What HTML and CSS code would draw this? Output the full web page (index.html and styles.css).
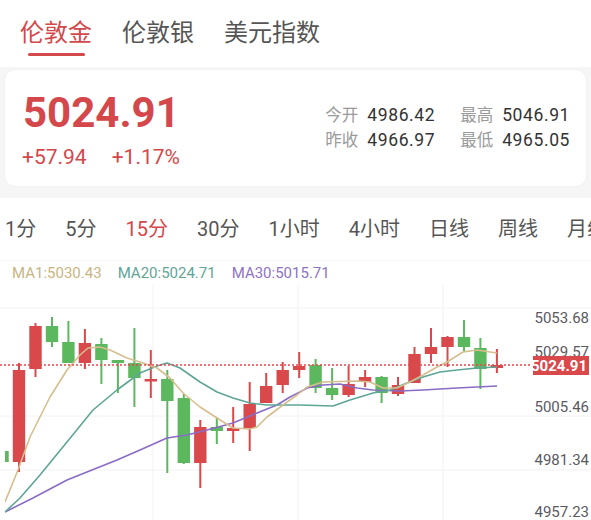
FILE: index.html
```html
<!DOCTYPE html>
<html lang="zh-CN">
<head>
<meta charset="utf-8">
<title>伦敦金</title>
<link rel="stylesheet" href="styles.css">
</head>
<body>
<div class="header">
  <div class="tab active"><span class="tab-label">伦敦金</span><span class="tab-line"></span></div>
  <div class="tab"><span class="tab-label">伦敦银</span></div>
  <div class="tab"><span class="tab-label">美元指数</span></div>
</div>

<div class="quote-wrap">
  <div class="quote-card">
    <div class="quote-main">
      <div class="price">5024.91</div>
      <div class="change"><span>+57.94</span><span>+1.17%</span></div>
    </div>
    <div class="stats">
      <div class="stat"><span class="stat-label">今开</span><span class="stat-value">4986.42</span></div>
      <div class="stat"><span class="stat-label">最高</span><span class="stat-value">5046.91</span></div>
      <div class="stat"><span class="stat-label">昨收</span><span class="stat-value">4966.97</span></div>
      <div class="stat"><span class="stat-label">最低</span><span class="stat-value">4965.05</span></div>
    </div>
  </div>
</div>

<div class="periods">
  <span class="period">1分</span>
  <span class="period">5分</span>
  <span class="period active">15分</span>
  <span class="period">30分</span>
  <span class="period">1小时</span>
  <span class="period">4小时</span>
  <span class="period">日线</span>
  <span class="period">周线</span>
  <span class="period">月线</span>
</div>

<div class="legend">
  <span class="ma ma1">MA1:5030.43</span>
  <span class="ma ma20">MA20:5024.71</span>
  <span class="ma ma30">MA30:5015.71</span>
</div>

<svg class="chart" width="591" height="235" viewBox="0 285 591 235" xmlns="http://www.w3.org/2000/svg">
  <defs>
    <clipPath id="plot"><rect x="5" y="285" width="528" height="235"/></clipPath>
  </defs>
  <g class="grid">
    <line x1="0" y1="308" x2="591" y2="308"/>
    <line x1="0" y1="362" x2="591" y2="362"/>
    <line x1="0" y1="416" x2="591" y2="416"/>
    <line x1="0" y1="470" x2="591" y2="470"/>
    <line x1="153" y1="285" x2="153" y2="520"/>
    <line x1="298" y1="285" x2="298" y2="520"/>
    <line x1="443" y1="285" x2="443" y2="520"/>
  </g>
  <g clip-path="url(#plot)">
    <g class="up">
      <line x1="19" y1="363" x2="19" y2="472"/><rect x="12.8" y="370" width="12.4" height="92"/>
      <line x1="35.5" y1="323" x2="35.5" y2="377"/><rect x="29.3" y="326" width="12.4" height="43"/>
      <line x1="84.9" y1="329" x2="84.9" y2="369"/><rect x="78.7" y="343" width="12.4" height="20"/>
      <line x1="150.8" y1="350" x2="150.8" y2="398"/><rect x="144.6" y="379" width="12.4" height="2.5"/>
      <line x1="200.3" y1="420" x2="200.3" y2="488"/><rect x="194.1" y="427" width="12.4" height="36"/>
      <line x1="233.2" y1="407" x2="233.2" y2="443"/><rect x="227" y="428" width="12.4" height="3"/>
      <line x1="249.7" y1="382" x2="249.7" y2="451"/><rect x="243.5" y="404" width="12.4" height="24"/>
      <line x1="266.2" y1="373" x2="266.2" y2="403"/><rect x="260" y="386" width="12.4" height="17"/>
      <line x1="282.7" y1="362" x2="282.7" y2="393"/><rect x="276.5" y="370" width="12.4" height="15"/>
      <line x1="299.2" y1="352" x2="299.2" y2="378"/><rect x="293" y="366" width="12.4" height="4"/>
      <line x1="348.6" y1="366" x2="348.6" y2="397"/><rect x="342.4" y="384" width="12.4" height="11"/>
      <line x1="365.1" y1="370" x2="365.1" y2="387"/><rect x="358.9" y="377" width="12.4" height="5"/>
      <line x1="398" y1="377" x2="398" y2="396"/><rect x="391.8" y="385" width="12.4" height="9"/>
      <line x1="414.5" y1="347" x2="414.5" y2="383"/><rect x="408.3" y="354" width="12.4" height="29"/>
      <line x1="431" y1="328" x2="431" y2="363"/><rect x="424.8" y="347" width="12.4" height="7"/>
      <line x1="447.5" y1="336" x2="447.5" y2="367"/><rect x="441.3" y="337" width="12.4" height="10"/>
      <line x1="496.9" y1="349" x2="496.9" y2="373"/><rect x="490.7" y="365" width="12.4" height="3"/>
    </g>
    <g class="down">
      <rect x="-3.7" y="451" width="12.4" height="11"/>
      <line x1="52" y1="317" x2="52" y2="347"/><rect x="45.8" y="326" width="12.4" height="16"/>
      <line x1="68.4" y1="321" x2="68.4" y2="363"/><rect x="62.2" y="342" width="12.4" height="21"/>
      <line x1="101.4" y1="338" x2="101.4" y2="384"/><rect x="95.2" y="344" width="12.4" height="16"/>
      <line x1="117.9" y1="360" x2="117.9" y2="393"/><rect x="111.7" y="360" width="12.4" height="3"/>
      <line x1="134.4" y1="328" x2="134.4" y2="407"/><rect x="128.2" y="363" width="12.4" height="15"/>
      <line x1="167.3" y1="370" x2="167.3" y2="473"/><rect x="161.1" y="379" width="12.4" height="22"/>
      <line x1="183.8" y1="394" x2="183.8" y2="464"/><rect x="177.6" y="398" width="12.4" height="65"/>
      <line x1="216.8" y1="417" x2="216.8" y2="444"/><rect x="210.6" y="427" width="12.4" height="4"/>
      <line x1="315.6" y1="359" x2="315.6" y2="393"/><rect x="309.4" y="365" width="12.4" height="23"/>
      <line x1="332.1" y1="368" x2="332.1" y2="400"/><rect x="325.9" y="388" width="12.4" height="7"/>
      <line x1="381.6" y1="376" x2="381.6" y2="403"/><rect x="375.4" y="377" width="12.4" height="16"/>
      <line x1="464" y1="320" x2="464" y2="351"/><rect x="457.8" y="337" width="12.4" height="10"/>
      <line x1="480.4" y1="338" x2="480.4" y2="389"/><rect x="474.2" y="348" width="12.4" height="21"/>
    </g>
    <polyline class="line-ma30" points="5,512 33,498 67,480 87,472 117,460 140,450 167,438 187,435 207,430 233,423 257,413 277,405 290,397 300,392 307,388 323,385 340,384 357,388 373,390 400,391 423,390 457,388 477,387 497,386"/>
    <polyline class="line-ma20" points="5,512 20,498 40,475 67,442 93,410 117,390 140,373 157,366 167,363 180,368 200,382 217,392 233,398 250,403 267,405 300,405 333,406 350,400 373,393 390,390 407,383 423,377 440,372 457,370 477,368 497,367"/>
    <polyline class="line-ma1" points="5,502 18,470 30,437 50,397 67,370 80,355 88,348 100,347 110,350 127,358 140,362 157,368 170,378 183,393 200,407 217,418 233,428 250,429 257,427 267,417 283,405 297,395 307,387 323,382 357,381 370,382 383,388 397,388 410,382 423,375 437,367 447,362 463,352 477,350 490,352 497,353"/>
  </g>
  <line class="price-line" x1="0" y1="365" x2="533" y2="365"/>
  <g class="axis">
    <text x="589" y="323">5053.68</text>
    <text x="589" y="357">5029.57</text>
    <text x="589" y="412">5005.46</text>
    <text x="589" y="465">4981.34</text>
    <text x="589" y="517">4957.23</text>
  </g>
  <rect class="price-tag" x="533" y="356" width="56" height="19"/>
  <text class="price-tag-text" x="587" y="371">5024.91</text>
</svg>
</body>
</html>
```
FILE: styles.css
```css
* { box-sizing: border-box; }

html, body {
  margin: 0;
  padding: 0;
}

body {
  width: 591px;
  height: 520px;
  overflow: hidden;
  background: #ffffff;
  font-family: Roboto, "Noto Sans CJK SC", sans-serif;
  color: #333333;
}

.header {
  display: flex;
  gap: 30px;
  height: 67px;
  padding: 20px 0 0 20px;
  background: #ffffff;
}

.tab {
  display: flex;
  flex-direction: column;
  align-items: center;
}

.tab-label {
  font-size: 24px;
  line-height: 26px;
  color: #555555;
}

.tab.active .tab-label {
  color: #d4474b;
}

.tab-line {
  width: 57px;
  height: 3px;
  margin-top: 7px;
  border-radius: 2px;
  background: #d4474b;
}

.quote-wrap {
  background: #f6f6f6;
  padding: 3px 5px 12px 5px;
}

.quote-card {
  height: 116px;
  background: #ffffff;
  border-radius: 10px;
  box-shadow: 0 0 3px rgba(0, 0, 0, 0.05);
  display: flex;
  justify-content: space-between;
  align-items: flex-start;
  padding: 22px 16px 0 18px;
}

.price {
  font-size: 42px;
  line-height: 42px;
  font-weight: 700;
  color: #d4474b;
}

.change {
  display: flex;
  gap: 25px;
  margin-top: 13px;
  margin-left: -1px;
  font-size: 21px;
  line-height: 21px;
  color: #d4474b;
}

.stats {
  display: grid;
  grid-template-columns: auto auto;
  column-gap: 25px;
  row-gap: 0;
  margin-top: 11px;
}

.stat {
  display: flex;
  gap: 9px;
  line-height: 25px;
}

.stat-label {
  font-size: 16.5px;
  color: #9a9a9a;
}

.stat-value {
  font-size: 17.5px;
  letter-spacing: 0.6px;
  color: #333333;
}

.periods {
  display: flex;
  gap: 29px;
  height: 62px;
  padding: 19px 0 0 5px;
  white-space: nowrap;
  overflow: hidden;
  background: #ffffff;
}

.period {
  flex: none;
  font-size: 20px;
  line-height: 24px;
  color: #555555;
}

.period.active {
  color: #d4474b;
}

.legend {
  display: flex;
  gap: 16px;
  height: 25px;
  padding: 2px 0 0 12px;
  border-top: 1px solid #f4f4f4;
  font-size: 15px;
  line-height: 20px;
}

.ma1 { color: #c9b483; }
.ma20 { color: #62a596; }
.ma30 { color: #8f72c4; }

.chart {
  display: block;
}

.grid line {
  stroke: #f2f2f2;
  stroke-width: 1;
}

.up line, .down line {
  stroke-width: 2;
}

.up rect { fill: #d9484b; }
.up line { stroke: #d9484b; }
.down rect { fill: #5cb85f; }
.down line { stroke: #5cb85f; }

polyline {
  fill: none;
  stroke-width: 1.6;
  stroke-linejoin: round;
}

.line-ma1 { stroke: #d6be8e; }
.line-ma20 { stroke: #5fa596; }
.line-ma30 { stroke: #8a6cc6; }

.price-line {
  stroke: #e04a4e;
  stroke-width: 1.5;
  stroke-dasharray: 2 2;
}

.axis text {
  font-family: Roboto, sans-serif;
  font-size: 15px;
  fill: #5a5a64;
  text-anchor: end;
}

.price-tag {
  fill: #d9484b;
}

.price-tag-text {
  font-family: Roboto, sans-serif;
  font-size: 15px;
  font-weight: 700;
  fill: #ffffff;
  text-anchor: end;
}
```
